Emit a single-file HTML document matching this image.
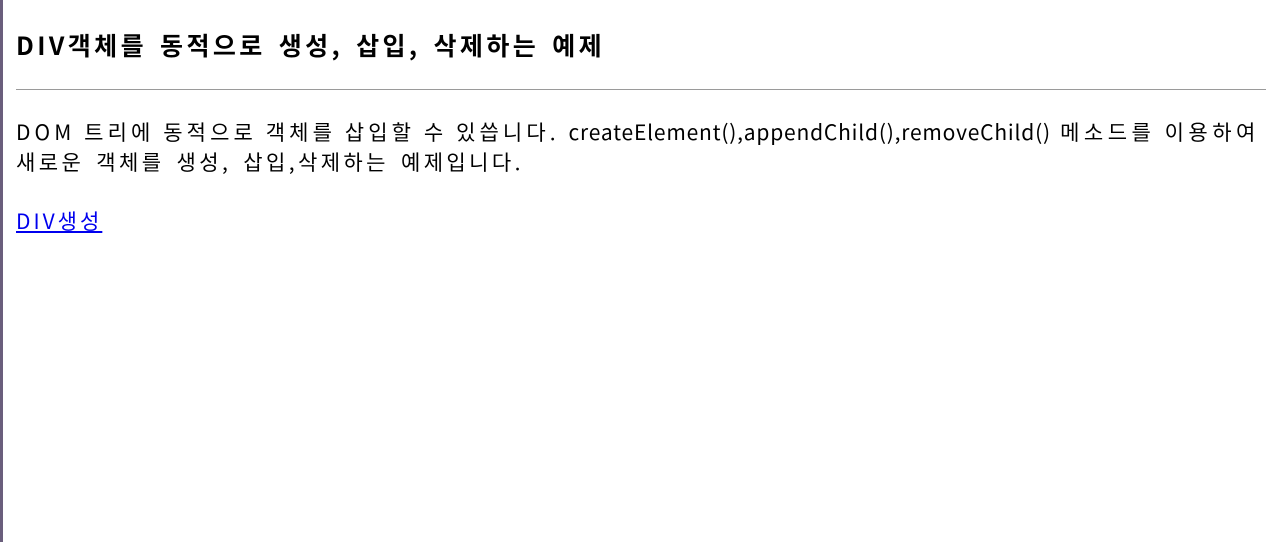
<!DOCTYPE html>
<html><head><meta charset="utf-8"><style>
html,body{margin:0;padding:0;background:#fff;}
body{width:1268px;height:542px;overflow:hidden;position:relative;font-family:"Noto Sans CJK KR","Liberation Sans",sans-serif;color:#000;}
.bar{position:absolute;left:0;top:0;width:3px;height:542px;background:#6a5e7c;}
h1{position:absolute;left:16px;top:27px;margin:0;font-size:25px;font-weight:bold;line-height:36px;white-space:nowrap;letter-spacing:3.4px;word-spacing:4px;}
hr{position:absolute;left:16px;top:89px;width:1250px;margin:0;border:0;border-top:1px solid #9a9a9a;}
p{position:absolute;left:16px;top:117px;margin:0;width:1260px;font-size:21px;line-height:30px;white-space:nowrap;letter-spacing:4.1px;}
a{position:absolute;left:16px;top:206px;font-size:21px;line-height:30px;color:#0000ee;letter-spacing:3px;}
</style></head><body>
<div class="bar"></div>
<h1>DIV객체를 동적으로 생성, 삽입, 삭제하는 예제</h1>
<hr>
<p>DOM 트리에 동적으로 객체를 삽입할 수 있씁니다. <span style="letter-spacing:0.8px">createElement(),appendChild(),removeChild()</span><span style="letter-spacing:4.5px"> 메소드를 이용하여</span><br><span style="letter-spacing:3.4px;word-spacing:4px">새로운 객체를 생성, 삽입,삭제하는 예제입니다.</span></p>
<a href="#">DIV생성</a>
</body></html>
